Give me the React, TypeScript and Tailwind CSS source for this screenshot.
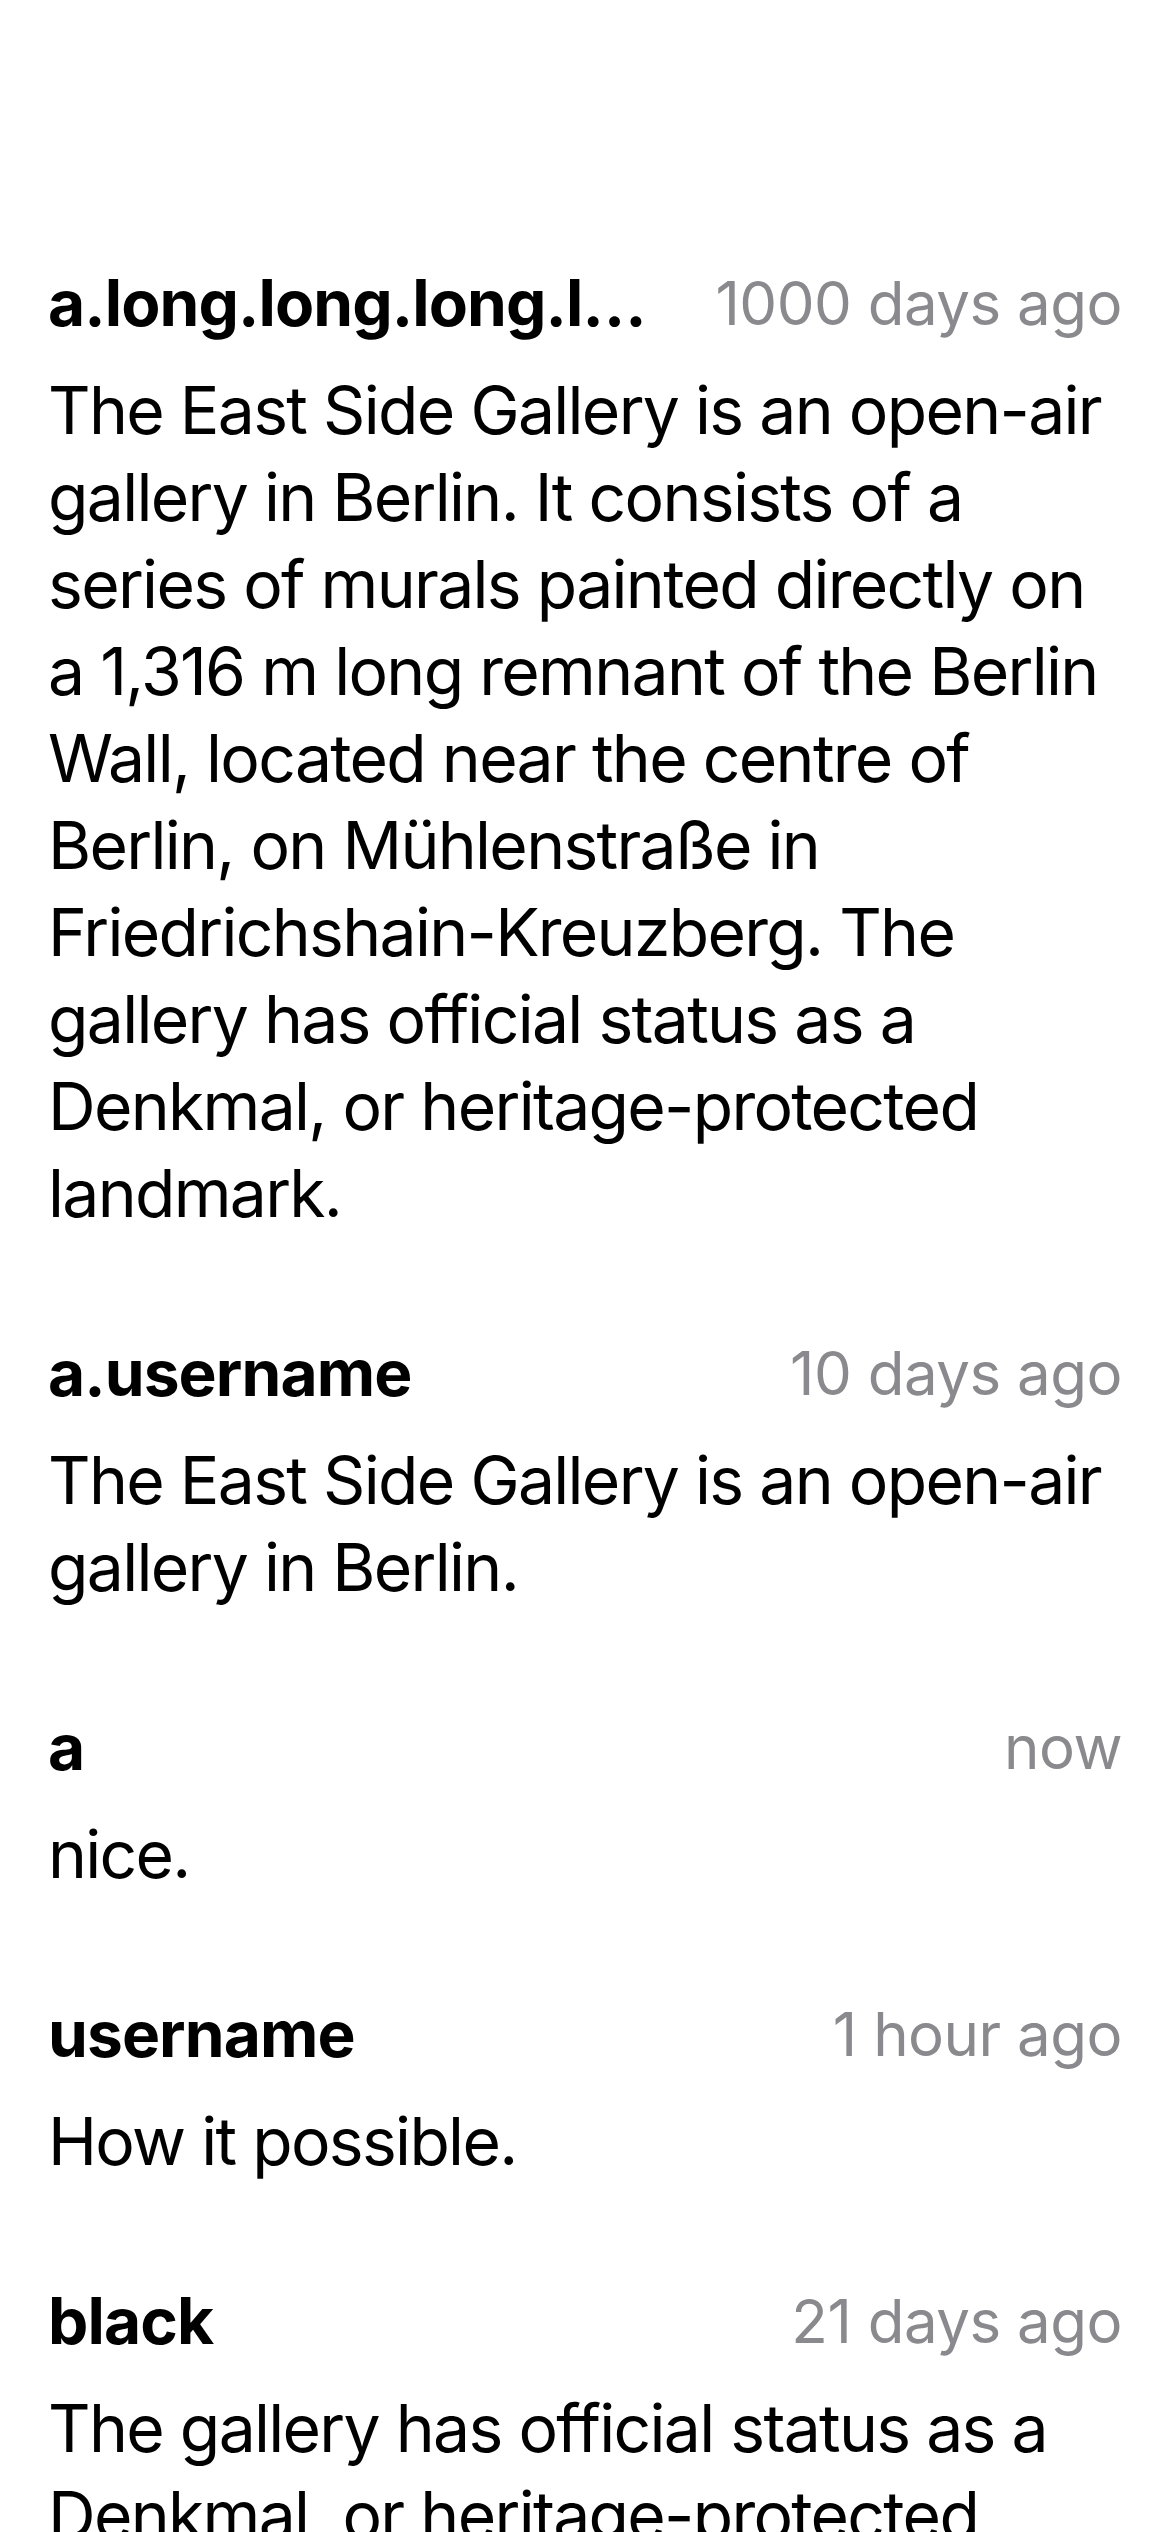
import React from 'react';

type Comment = {
  user: string;
  time: string;
  body: string;
};

const comments: Comment[] = [
  {
    user: 'a.long.long.long.long.long.username',
    time: '1000 days ago',
    body: 'The East Side Gallery is an open-air gallery in Berlin. It consists of a series of murals painted directly on a 1,316 m long remnant of the Berlin Wall, located near the centre of Berlin, on Mühlenstraße in Friedrichshain-Kreuzberg. The gallery has official status as a Denkmal, or heritage-protected landmark.',
  },
  {
    user: 'a.username',
    time: '10 days ago',
    body: 'The East Side Gallery is an open-air gallery in Berlin.',
  },
  { user: 'a', time: 'now', body: 'nice.' },
  { user: 'username', time: '1 hour ago', body: 'How it possible.' },
  {
    user: 'black',
    time: '21 days ago',
    body: 'The gallery has official status as a Denkmal, or heritage-protected landmark.',
  },
];

function CommentRow({ c }: { c: Comment }) {
  return (
    <div className="flex flex-col">
      <div className="flex items-center gap-[60px] h-[72px]">
        <span className="flex-1 min-w-0 truncate text-[64px] leading-[88px] font-bold text-black tracking-[-0.9px]">
          {c.user}
        </span>
        <span className="shrink-0 text-[60px] leading-[72px] text-[#8a8a8e] tracking-[-0.5px]">{c.time}</span>
      </div>
      <p className="mt-[28px] text-[66px] leading-[87px] text-black tracking-[-1.7px]">{c.body}</p>
    </div>
  );
}

export default function App() {
  return (
    <div
      className="w-[1170px] h-[2532px] overflow-hidden bg-white px-[48px] pt-[267px]"
      style={{ fontFamily: 'Inter, "Noto Sans", sans-serif' }}
    >
      <div className="flex flex-col gap-[100px]">
        {comments.map((c, i) => (
          <CommentRow key={i} c={c} />
        ))}
      </div>
    </div>
  );
}
